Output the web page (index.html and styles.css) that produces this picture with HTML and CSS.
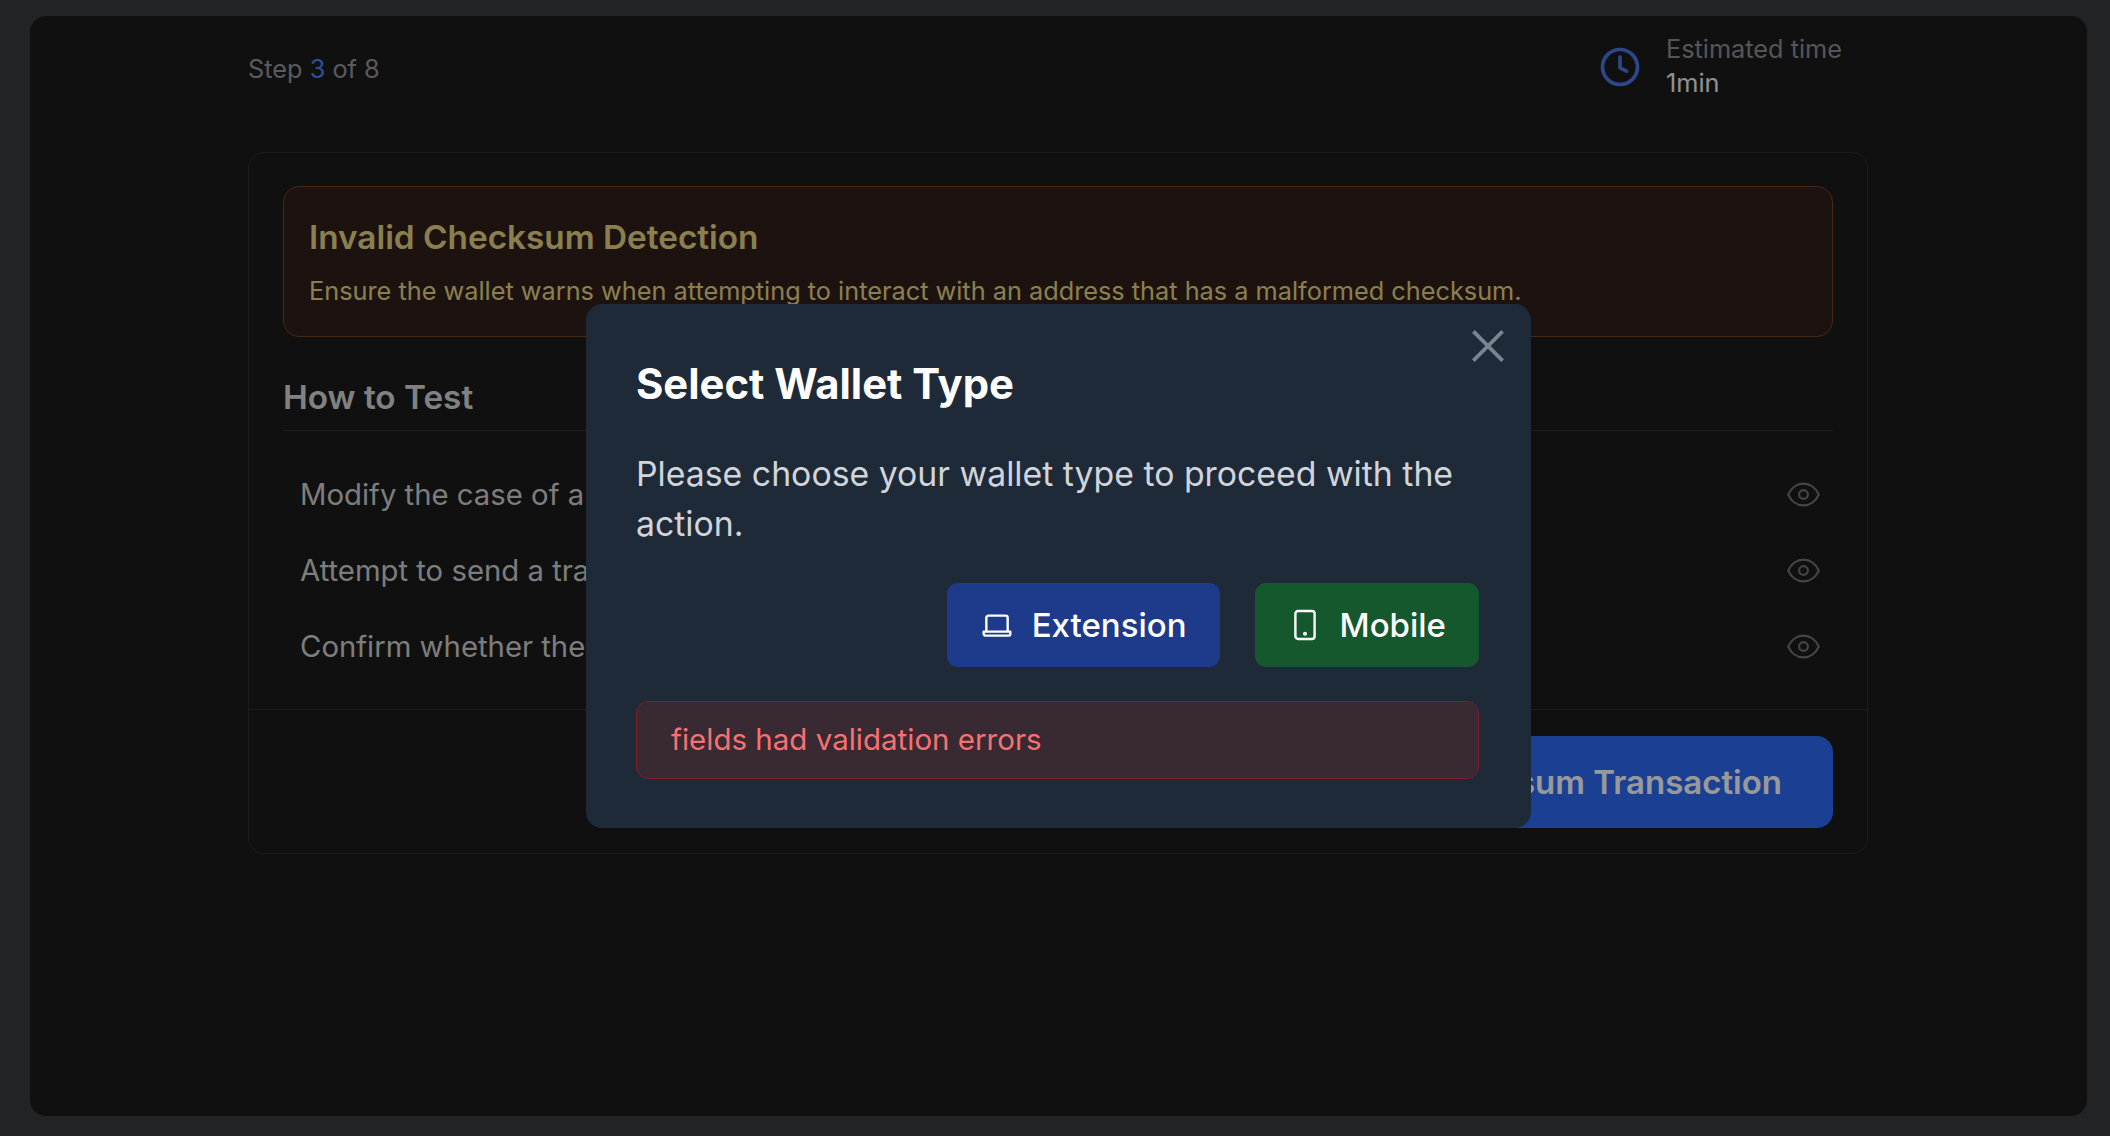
FILE: index.html
```html
<!DOCTYPE html>
<html lang="en">
<head>
  <meta charset="UTF-8">
  <title>Select Wallet Type</title>
  <link rel="stylesheet" href="styles.css">
</head>
<body>

  <div class="panel">
    <div class="wrap">

      <div class="top">
        <div class="step">Step <span class="step-num">3</span> of 8</div>
        <div class="time">
          <svg class="clock" viewBox="0 0 24 24" fill="none" stroke="currentColor" stroke-width="2.200" stroke-linecap="round" stroke-linejoin="round">
            <circle cx="12" cy="12" r="10.500"/>
            <path d="M12 6v6.500l4 2"/>
          </svg>
          <div class="time-text">
            <div class="time-label">Estimated time</div>
            <div class="time-value">1min</div>
          </div>
        </div>
      </div>

      <div class="card">
        <div class="card-body">
          <div class="banner">
            <h2 class="banner-title">Invalid Checksum Detection</h2>
            <p class="banner-text">Ensure the wallet warns when attempting to interact with an address that has a malformed checksum.</p>
          </div>

          <h3 class="howto">How to Test</h3>

          <div class="row">
            <span>Modify the case of a bit</span>
            <svg class="eye" viewBox="0 0 24 24" fill="none" stroke="currentColor" stroke-width="1.500"><path d="M1.500 12C3.500 7.500 7.500 4.500 12 4.500s8.500 3 10.500 7.500c-2 4.500-6 7.500-10.500 7.500S3.500 16.500 1.500 12z"/><circle cx="12" cy="12" r="3"/></svg>
          </div>
          <div class="row">
            <span>Attempt to send a transaction to the modified address</span>
            <svg class="eye" viewBox="0 0 24 24" fill="none" stroke="currentColor" stroke-width="1.500"><path d="M1.500 12C3.500 7.500 7.500 4.500 12 4.500s8.500 3 10.500 7.500c-2 4.500-6 7.500-10.500 7.500S3.500 16.500 1.500 12z"/><circle cx="12" cy="12" r="3"/></svg>
          </div>
          <div class="row">
            <span>Confirm whether the wallet shows a warning</span>
            <svg class="eye" viewBox="0 0 24 24" fill="none" stroke="currentColor" stroke-width="1.500"><path d="M1.500 12C3.500 7.500 7.500 4.500 12 4.500s8.500 3 10.500 7.500c-2 4.500-6 7.500-10.500 7.500S3.500 16.500 1.500 12z"/><circle cx="12" cy="12" r="3"/></svg>
          </div>
        </div>

        <div class="card-foot">
          <button class="submit">Send Invalid Checksum Transaction</button>
        </div>
      </div>

    </div>
  </div>

  <div class="overlay">
    <div class="modal">
      <svg class="close" viewBox="0 0 24 24" fill="none" stroke="currentColor" stroke-width="2.800" stroke-linecap="square"><path d="M2 2l20 20M22 2L2 22"/></svg>
      <h2 class="modal-title">Select Wallet Type</h2>
      <p class="modal-text">Please choose your wallet type to proceed with the action.</p>
      <div class="modal-btns">
        <button class="btn btn-blue">
          <svg class="btn-icon" viewBox="0 0 24 24" fill="none" stroke="currentColor" stroke-width="1.800" stroke-linejoin="round"><path d="M4 17V6.500A1.500 1.500 0 0 1 5.500 5h13A1.500 1.500 0 0 1 20 6.500V17"/><path d="M2 17h20v1.500a1.500 1.500 0 0 1-1.500 1.500h-17A1.500 1.500 0 0 1 2 18.500z"/></svg>
          Extension
        </button>
        <button class="btn btn-green">
          <svg class="btn-icon" viewBox="0 0 24 24" fill="none" stroke="currentColor" stroke-width="1.800"><rect x="4.800" y="1.500" width="14.400" height="21" rx="2"/><circle cx="12" cy="18.500" r="0.600"/></svg>
          Mobile
        </button>
      </div>
      <div class="error">fields had validation errors</div>
    </div>
  </div>

</body>
</html>
```

FILE: styles.css
```css
*{
  box-sizing: border-box;
}
html,body{
  height: 100%;
}
body{
  margin: 0;
  padding: 16px 23px 20px 30px;
  background: #3a3b3f;
  font-family: Inter, "Noto Sans", sans-serif;
  color: #e5e7eb;
}
h2,h3,p{
  margin: 0;
}

.panel{
  height: 100%;
  padding: 0 219px 0 218px;
  background: #1c1c1d;
  border-radius: 16px;
}

.top{
  display: flex;
  justify-content: space-between;
  align-items: center;
  height: 136px;
  padding-right: 26px;
  padding-bottom: 35px;
}
.step{
  margin-top: 4px;
  font-size: 25.300px;
  color: #96969e;
}
.step-num{
  color: #4b85ff;
}
.time{
  display: flex;
  align-items: center;
  gap: 26px;
  font-size: 25.300px;
  line-height: 33.500px;
}
.time-text{
  margin-top: -2px;
}
.clock{
  width: 40px;
  height: 40px;
  color: #4b78e6;
}
.time-label{
  color: #8e8e93;
}
.time-value{
  color: #f0f0f0;
}

.card{
  border: 1px solid #2d2f34;
  border-radius: 16px;
  height: 702px;
}
.card-body{
  padding: 33px 34px 0;
  height: 557px;
  border-bottom: 1px solid #2d2f34;
}
.banner{
  height: 151px;
  padding: 28px 25px 0;
  background: #2f1e1b;
  border: 1px solid #754321;
  border-radius: 16px;
}
.banner-title{
  font-size: 33.300px;
  line-height: 44px;
  font-weight: 600;
  color: #e6d684;
}
.banner-text{
  margin-top: 15px;
  font-size: 25.300px;
  line-height: 34px;
  color: #e6d684;
}
.howto{
  margin-top: 38px;
  height: 56px;
  font-size: 33.300px;
  line-height: 44px;
  font-weight: 600;
  color: #d8d8d8;
  border-bottom: 1px solid #2d2f34;
}
.row{
  display: flex;
  justify-content: space-between;
  align-items: center;
  height: 76px;
  padding: 0 12px 0 17px;
  font-size: 29.300px;
  color: #d0d0d0;
}
.howto + .row{
  margin-top: 25px;
}
.eye{
  width: 35px;
  height: 35px;
  color: #747478;
}

.card-foot{
  display: flex;
  justify-content: flex-end;
  padding: 26px 34px 0;
}
.submit{
  height: 92px;
  padding: 0 51px;
  border: 0;
  border-radius: 16px;
  background: #2e6bf5;
  color: #fff;
  font-family: inherit;
  font-size: 33px;
  font-weight: 600;
}

/* backdrop, the modal sits over everything */
.overlay{
  position: fixed;
  top: 0;
  left: 0;
  right: 0;
  bottom: 0;
  display: flex;
  align-items: center;
  justify-content: center;
  padding-left: 7px;
  padding-bottom: 4px;
  background: rgba(0,0,0,.4);
}
.modal{
  position: relative;
  width: 945px;
  height: 524px;
  padding: 53px 52px 0 50px;
  background: #1e2a38;
  border-radius: 16px;
}
.close{
  position: absolute;
  top: 26px;
  right: 27px;
  width: 32px;
  height: 32px;
  color: #7b8491;
}
.modal-title{
  font-size: 41.800px;
  line-height: 54px;
  font-weight: 700;
  color: #fff;
}
.modal-text{
  margin-top: 38px;
  font-size: 33.800px;
  line-height: 50px;
  color: #d1d5db;
}
.modal-btns{
  display: flex;
  justify-content: flex-end;
  gap: 35px;
  margin-top: 34px;
}
.btn{
  display: flex;
  align-items: center;
  gap: 19px;
  height: 84px;
  padding: 0 33px 0 34px;
  border: 0;
  border-radius: 11px;
  color: #fff;
  font-family: inherit;
  font-size: 33px;
  font-weight: 500;
}
.btn-blue{
  background: #1e3a8a;
}
.btn-green{
  background: #15582e;
}
.btn-icon{
  width: 32px;
  height: 32px;
}
.error{
  margin-top: 34px;
  height: 78px;
  padding: 0 34px 2px;
  display: flex;
  align-items: center;
  background: #382933;
  border: 1px solid #7f1d2d;
  border-radius: 12px;
  font-size: 29.500px;
  color: #f87171;
}
```
